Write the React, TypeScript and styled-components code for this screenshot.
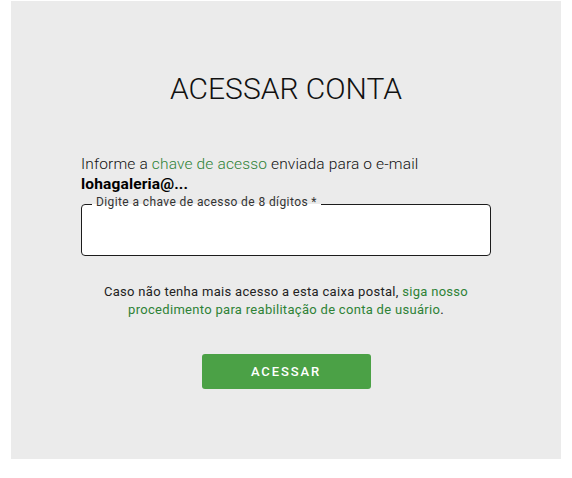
import React from "react";
import styled, { createGlobalStyle } from "styled-components";

const GlobalStyle = createGlobalStyle`
  html, body { margin: 0; padding: 0; background: #ffffff; }
  body { font-family: Roboto, "Liberation Sans", Arial, sans-serif; color: #111; }
  * { box-sizing: border-box; }
`;

const Page = styled.div`
  padding: 1px 11px 19px 11px;
`;

const Panel = styled.main`
  width: 550px;
  height: 458px;
  background: #ebebeb;
  padding: 70px 70px 0 70px;
  display: flex;
  flex-direction: column;
`;

const Title = styled.h1`
  margin: 0;
  font-size: 30px;
  line-height: 35px;
  font-weight: 300;
  color: #111;
  text-align: center;
`;

const Intro = styled.p`
  margin: 48px 0 0 0;
  font-size: 15.5px;
  line-height: 20px;
  font-weight: 300;
  letter-spacing: 0.15px;
  color: #111;
`;

const Email = styled.strong`
  display: block;
  font-weight: 700;
  color: #000;
`;

const Link = styled.a`
  color: #2e8236;
  text-decoration: none;
`;

const Field = styled.fieldset`
  margin: 2px 0 0 0;
  padding: 0 10px;
  border: 1px solid #1c1c1c;
  border-radius: 4px;
  background: #ffffff;
  min-width: 0;
`;

const Legend = styled.legend`
  padding: 0 4px 4px 4px;
  font-size: 12px;
  line-height: 12px;
  font-weight: 400;
  letter-spacing: 0.4px;
  color: #333;
`;

const Input = styled.input`
  display: block;
  width: 100%;
  height: 43px;
  border: none;
  outline: none;
  background: transparent;
  font-family: inherit;
  font-size: 16px;
  padding: 0;
`;

const Help = styled.p`
  margin: 27px 0 0 0;
  font-size: 13px;
  line-height: 18px;
  font-weight: 400;
  letter-spacing: 0.3px;
  color: #222;
  text-align: center;
`;

const Actions = styled.div`
  display: flex;
  justify-content: center;
  margin-top: 35px;
`;

const Button = styled.button`
  width: 169px;
  height: 35px;
  border: none;
  border-radius: 3px;
  background: #4ba146;
  color: #ffffff;
  font-family: inherit;
  font-size: 13px;
  font-weight: 500;
  letter-spacing: 1.9px;
  cursor: pointer;
`;

export default function App() {
  return (
    <>
      <GlobalStyle />
      <Page>
        <Panel>
          <Title>ACESSAR CONTA</Title>
          <Intro>
            Informe a <Link href="#">chave de acesso</Link> enviada para o e-mail
            <Email>lohagaleria@...</Email>
          </Intro>
          <Field>
            <Legend>Digite a chave de acesso de 8 dígitos *</Legend>
            <Input type="text" aria-label="Chave de acesso" />
          </Field>
          <Help>
            Caso não tenha mais acesso a esta caixa postal,{" "}
            <Link href="#">siga nosso procedimento para reabilitação de conta de usuário</Link>.
          </Help>
          <Actions>
            <Button type="button">ACESSAR</Button>
          </Actions>
        </Panel>
      </Page>
    </>
  );
}
